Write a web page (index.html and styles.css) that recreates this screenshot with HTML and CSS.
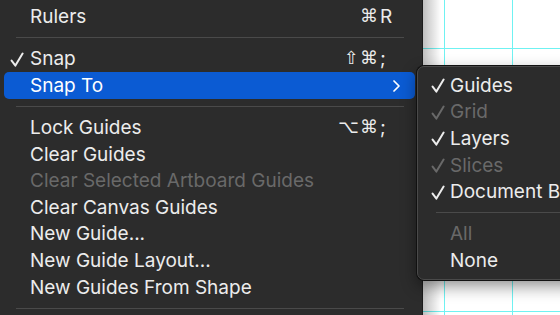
FILE: index.html
```html
<!DOCTYPE html>
<html lang="en">
<head>
  <meta charset="UTF-8">
  <meta name="viewport" content="width=device-width, initial-scale=1.0">
  <link rel="stylesheet" href="styles.css">
  <title>View Menu</title>
</head>
<body>

<div class="screen">
  <div class="menu">
    <div class="item"><span class="check"></span><span class="label">Rulers</span><span class="keys"><span class="mods">⌘</span><span class="key">R</span></span></div>
    <div class="sep"></div>
    <div class="item"><span class="check"><svg viewBox="0 0 14 15"><path d="M1.6 8.6 L5.4 13.6 L12.6 1.6"/></svg></span><span class="label">Snap</span><span class="keys"><span class="mods">⇧⌘</span><span class="key">;</span></span></div>
    <div class="item active"><span class="check"></span><span class="label">Snap To</span><span class="arrow"><svg viewBox="0 0 7 12"><path d="M1 1 L6 6 L1 11"/></svg></span></div>
    <div class="sep"></div>
    <div class="item"><span class="check"></span><span class="label">Lock Guides</span><span class="keys"><span class="mods">⌥⌘</span><span class="key">;</span></span></div>
    <div class="item"><span class="check"></span><span class="label">Clear Guides</span></div>
    <div class="item disabled"><span class="check"></span><span class="label">Clear Selected Artboard Guides</span></div>
    <div class="item"><span class="check"></span><span class="label">Clear Canvas Guides</span></div>
    <div class="item"><span class="check"></span><span class="label">New Guide...</span></div>
    <div class="item"><span class="check"></span><span class="label">New Guide Layout...</span></div>
    <div class="item"><span class="check"></span><span class="label">New Guides From Shape</span></div>
    <div class="sep"></div>
  </div>

  <div class="canvas"></div>

  <div class="submenu">
    <div class="item"><span class="check"><svg viewBox="0 0 14 15"><path d="M1.6 8.6 L5.4 13.6 L12.6 1.6"/></svg></span><span class="label">Guides</span></div>
    <div class="item disabled"><span class="check"><svg viewBox="0 0 14 15"><path d="M1.6 8.6 L5.4 13.6 L12.6 1.6"/></svg></span><span class="label">Grid</span></div>
    <div class="item"><span class="check"><svg viewBox="0 0 14 15"><path d="M1.6 8.6 L5.4 13.6 L12.6 1.6"/></svg></span><span class="label">Layers</span></div>
    <div class="item disabled"><span class="check"><svg viewBox="0 0 14 15"><path d="M1.6 8.6 L5.4 13.6 L12.6 1.6"/></svg></span><span class="label">Slices</span></div>
    <div class="item"><span class="check"><svg viewBox="0 0 14 15"><path d="M1.6 8.6 L5.4 13.6 L12.6 1.6"/></svg></span><span class="label">Document Bounds</span></div>
    <div class="sep"></div>
    <div class="item disabled"><span class="check"></span><span class="label">All</span></div>
    <div class="item"><span class="check"></span><span class="label">None</span></div>
  </div>
</div>

</body>
</html>
```

FILE: styles.css
```css
body {
  margin: 0;
  font-family: 'Inter', 'Noto Sans', sans-serif;
  background-color: #2c2c2c;
  color: #ececec;
  overflow: hidden;
}

.screen {
  position: relative;
  display: flex;
  width: 560px;
  height: 315px;
  overflow: hidden;
}

.menu {
  width: 411px;
  flex-shrink: 0;
  padding: 3.7px 7px 0 4px;
  background-color: #2c2c2c;
  border-right: 1px solid #1c1c1c;
}

.canvas {
  flex: 1;
  background-color: #fff;
  background-image:
    linear-gradient(to right, rgba(0, 0, 0, 0.25), rgba(0, 0, 0, 0) 18px),
    linear-gradient(#6ff2f2, #6ff2f2),
    linear-gradient(#6ff2f2, #6ff2f2),
    linear-gradient(#6ff2f2, #6ff2f2),
    linear-gradient(#6ff2f2, #6ff2f2);
  background-size: 100% 100%, 1px 100%, 1px 100%, 100% 1px, 100% 1px;
  background-position: 0 0, 21px 0, 89px 0, 0 48px, 0 311px;
  background-repeat: no-repeat;
}

.item {
  display: flex;
  align-items: center;
  height: 26.6px;
  padding: 0 15px 0 6px;
  font-size: 19px;
  white-space: nowrap;
  border-radius: 5px;
}

.check {
  width: 20px;
  flex-shrink: 0;
  display: flex;
  align-items: center;
}

.check svg {
  width: 14px;
  height: 15px;
  margin-top: 1px;
}

.check path,
.arrow path {
  fill: none;
  stroke: currentColor;
  stroke-width: 2;
  stroke-linecap: round;
  stroke-linejoin: round;
}

.label {
  flex: 1;
}

.keys {
  display: flex;
  font-family: 'DejaVu Sans', sans-serif;
  font-size: 18px;
  padding-right: 3px;
}

.mods {
  text-align: right;
  letter-spacing: 1px;
}

.key {
  width: 17px;
  padding-left: 1px;
  font-family: 'Inter', sans-serif;
  font-size: 19px;
}

.arrow {
  display: flex;
  align-items: center;
}

.arrow svg {
  width: 7px;
  height: 12px;
}

.arrow path {
  stroke-width: 1.7;
}

.active {
  background-color: #0b5bd3;
  color: #fff;
}

.disabled {
  color: #696969;
}

.sep {
  height: 15.4px;
  display: flex;
  align-items: center;
  margin: 0 11px 0 12px;
}

.sep::after {
  content: '';
  flex: 1;
  height: 1px;
  background-color: #4a4a4a;
}

.submenu {
  position: absolute;
  left: 417px;
  top: 66px;
  width: 200px;
  padding: 5px 5px;
  background-color: #2c2c2c;
  border: 1px solid #4a4a4a;
  border-radius: 7px;
  box-shadow: 0 0 0 1px #111, 0 6px 16px rgba(0, 0, 0, 0.45);
}

.submenu .item {
  padding-left: 8px;
}

.submenu .check {
  width: 19px;
}

.submenu .sep {
  margin: 0 0 0 13px;
}
```
